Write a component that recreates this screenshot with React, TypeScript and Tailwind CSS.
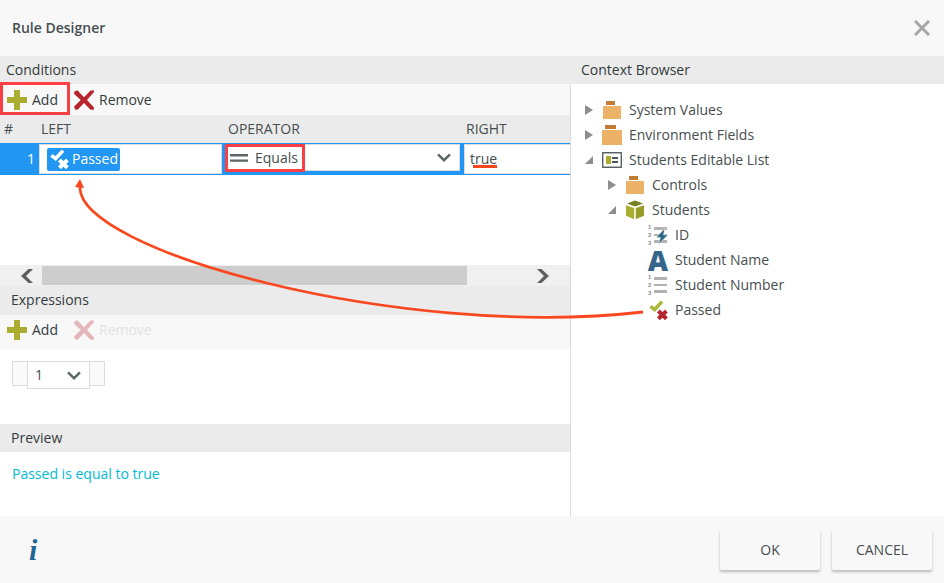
import { useState, type ReactNode } from "react";

const INK = "#464f50";

function PlusIcon() {
  return (
    <svg width="20" height="20" viewBox="0 0 20 20" aria-hidden="true">
      <path d="M7 0h6v7h7v6h-7v7H7v-7H0V7h7z" fill="#abad31" />
    </svg>
  );
}

function CrossIcon() {
  return (
    <svg width="20" height="20" viewBox="0 0 20 20" aria-hidden="true">
      <path d="M3.4 0.2 10 7.2 16.6 0.4 20 0.4 20 2 13 10 20 17.4 19.8 19.8 16.6 19.8 10 13 3.6 19.8 1 19.6 0.1 16.4 6.8 10 0.1 4 0.4 1.4z" fill="#b6252d" />
    </svg>
  );
}

function Chevron() {
  return (
    <svg width="14" height="9" viewBox="0 0 14 9" aria-hidden="true">
      <path d="M1 1.3 7 7.2 13 1.3" fill="none" stroke="#5c6667" strokeWidth="2.4" />
    </svg>
  );
}

function ScrollArrow({ flip = false }: { flip?: boolean }) {
  return (
    <svg width="12" height="14" viewBox="0 0 12 14" className={flip ? "rotate-180" : ""} aria-hidden="true">
      <path d="M7.5 0H12L5 7l7 7H7.5L0 7z" fill="#606060" />
    </svg>
  );
}

function CheckCross({ check, cross }: { check: string; cross: string }) {
  return (
    <svg width="20" height="20" viewBox="0 0 20 20" aria-hidden="true">
      <path d="M2.4 6.4 6.6 9.6 14 1.6" fill="none" stroke={check} strokeWidth="3.6" />
      <path d="M10.4 11 18.4 18.8M18.4 11 10.4 18.8" fill="none" stroke={cross} strokeWidth="4" />
    </svg>
  );
}

function FolderIcon({ large = false }: { large?: boolean }) {
  return (
    <svg width="20" height="20" viewBox="0 0 20 20" aria-hidden="true">
      {large ? (
        <>
          <path d="M3 0h11v4H3z" fill="#c47b33" />
          <path d="M0 5h20v15H0z" fill="#ebb268" />
        </>
      ) : (
        <>
          <path d="M4 1h9v4H4z" fill="#c47b33" />
          <path d="M1 6h18v13H1z" fill="#ebb268" />
        </>
      )}
    </svg>
  );
}

function ListIcon() {
  return (
    <svg width="20" height="20" viewBox="0 0 20 20" aria-hidden="true">
      <path d="M.7 2.7h18.6v14.6H.7z" fill="#fff" stroke="#5c6667" strokeWidth="1.4" />
      <path d="M4 6h5v8H4z" fill="#abad31" />
      <path d="M10 7h6v2h-6zM10 11h6v2h-6z" fill="#4c5658" />
    </svg>
  );
}

function CubeIcon() {
  return (
    <svg width="20" height="20" viewBox="0 0 20 20" aria-hidden="true">
      <path d="M2 3.4 10 .6l8 2.8-8 3z" fill="#76801f" />
      <path d="M1 5.2 9.2 8v11.2L1 15.8z" fill="#abad31" />
      <path d="M19 5.2 10.8 8v11.2L19 15.8z" fill="#989d2a" />
    </svg>
  );
}

function NumberIcon({ bolt = false }: { bolt?: boolean }) {
  return (
    <svg width="20" height="20" viewBox="0 0 20 20" className="overflow-visible" aria-hidden="true">
      <g fill="#8c8c8c" fontFamily="Liberation Sans, sans-serif" fontSize="6" fontWeight="700">
        <text x="0" y="4">1</text>
        <text x="0" y="12">2</text>
        <text x="0" y="20">3</text>
      </g>
      <path d="M6 2h13v3H6zM6 9h13v2H6zM6 15h13v3H6z" fill="#b2b2b2" />
      {bolt && (
        <path d="M16.8 3.2 8.2 12.6h4.2L10.4 19.2 20 10h-4.5z" fill="#2f6587" stroke="#fff" strokeWidth=".5" />
      )}
    </svg>
  );
}

function TextIcon() {
  return (
    <span
      className="flex h-5 w-5 items-center justify-center font-['Open_Sans',sans-serif] text-[28px] leading-5 font-extrabold text-[#34668a]"
      aria-hidden="true"
    >
      A
    </span>
  );
}

type Node = { label: string; icon: ReactNode; open?: boolean; branch?: boolean; children?: Node[] };

const TREE: Node[] = [
  { label: "System Values", icon: <FolderIcon />, branch: true },
  { label: "Environment Fields", icon: <FolderIcon large />, branch: true },
  {
    label: "Students Editable List",
    icon: <ListIcon />,
    branch: true,
    open: true,
    children: [
      { label: "Controls", icon: <FolderIcon />, branch: true },
      {
        label: "Students",
        icon: <CubeIcon />,
        branch: true,
        open: true,
        children: [
          { label: "ID", icon: <NumberIcon bolt /> },
          { label: "Student Name", icon: <TextIcon /> },
          { label: "Student Number", icon: <NumberIcon /> },
          { label: "Passed", icon: <CheckCross check="#abb83a" cross="#b6252d" /> },
        ],
      },
    ],
  },
];

function TreeList({ nodes, nested = false }: { nodes: Node[]; nested?: boolean }) {
  return (
    <ul className={nested ? "pl-[23px]" : ""}>
      {nodes.map((n) => (
        <li key={n.label}>
          <div className="flex h-[25px] items-center">
            <span className="flex w-[17px] shrink-0 items-center">
              {n.branch && (
                <svg width="8" height="10" viewBox="0 0 8 10" aria-hidden="true">
                  <path d={n.open ? "M8 1v8H0z" : "M0 0 8 5 0 10z"} fill="#8b8f8f" />
                </svg>
              )}
            </span>
            {n.icon}
            <span className="pl-[7px] whitespace-nowrap">{n.label}</span>
          </div>
          {n.children && <TreeList nodes={n.children} nested />}
        </li>
      ))}
    </ul>
  );
}

function ToolButton({ icon, label, disabled = false }: { icon: ReactNode; label: string; disabled?: boolean }) {
  return (
    <button type="button" disabled={disabled} className="flex items-center gap-[5px] text-[#333b3c] disabled:opacity-30">
      {icon}
      <span className={disabled ? "opacity-40" : ""}>{label}</span>
    </button>
  );
}

export default function App() {
  const [operator, setOperator] = useState("Equals");
  const [right, setRight] = useState("true");
  const [expression, setExpression] = useState("1");

  return (
    <div
      className="relative flex min-h-screen flex-col bg-[#f8f8f8] font-['Open_Sans','Noto_Sans',sans-serif] text-sm leading-5"
      style={{ color: INK }}
    >
      <header className="flex h-14 items-center justify-between pr-[14px] pl-3">
        <h1 className="font-semibold">Rule Designer</h1>
        <button type="button" aria-label="Close">
          <svg width="16" height="16" viewBox="0 0 16 16" aria-hidden="true">
            <path d="M1 1 15 15M15 1 1 15" stroke="#a6a6a6" strokeWidth="3" />
          </svg>
        </button>
      </header>

      <main className="grid flex-1 grid-cols-[571fr_373fr] bg-white">
        <div className="flex min-w-0 flex-col">
          <h2 className="flex h-7 items-center bg-[#ebebeb] pl-[6px] text-[#333b3c]">Conditions</h2>
          <div className="flex min-w-0 flex-1 flex-col border-r border-[#dcdcdc]">
            <div className="flex h-[31px] items-center gap-4 bg-[#f8f8f8] pl-[7px]">
              <div className="relative">
                <ToolButton icon={<PlusIcon />} label="Add" />
                <span className="pointer-events-none absolute -top-2 -right-3 -bottom-[5px] -left-[7px] border-3 border-[#fb4045]" />
              </div>
              <ToolButton icon={<CrossIcon />} label="Remove" />
            </div>

            <table className="w-full table-fixed border-collapse text-left">
              <colgroup>
                <col className="w-[39px]" />
                <col className="w-[183px]" />
                <col className="w-[241px]" />
                <col />
              </colgroup>
              <thead>
                <tr className="h-7 bg-[#ebebeb]">
                  <th className="p-0 pl-1 font-normal">#</th>
                  <th className="p-0 pl-[2px] font-normal">LEFT</th>
                  <th className="p-0 pl-[6px] font-normal">OPERATOR</th>
                  <th className="p-0 pl-[3px] font-normal">RIGHT</th>
                </tr>
              </thead>
              <tbody>
                <tr className="h-8 bg-[#2196f3]">
                  <td className="p-0 pr-1 text-right text-white">1</td>
                  <td className="p-0">
                    <div className="flex h-[30px] items-center border border-[#dcdcdc] bg-white pl-[7px]">
                      <span className="flex h-[23px] items-center gap-[3px] rounded-xs bg-[#2196f3] px-[2px] text-white">
                        <CheckCross check="#fff" cross="#fff" />
                        Passed
                      </span>
                    </div>
                  </td>
                  <td className="p-0 align-top">
                    <div className="relative mt-px mr-[3px] ml-[3px] h-[27px] border border-[#dcdcdc] bg-white">
                      <select
                        aria-label="Operator"
                        value={operator}
                        onChange={(e) => setOperator(e.target.value)}
                        className="h-full w-full appearance-none pl-[29px] outline-none"
                      >
                        <option>Equals</option>
                        <option>Not equals</option>
                      </select>
                      <span className="pointer-events-none absolute inset-y-0 left-1 flex items-center">
                        <svg width="18" height="8" viewBox="0 0 18 8" aria-hidden="true">
                          <path d="M0 0h18v2.4H0zM0 5.4h18v2.4H0z" fill="#5c6667" />
                        </svg>
                      </span>
                      <span className="pointer-events-none absolute inset-y-0 right-2 flex items-center">
                        <Chevron />
                      </span>
                      <span className="pointer-events-none absolute -top-px -left-px h-7 w-20 border-3 border-[#fb4045]" />
                    </div>
                  </td>
                  <td className="p-0">
                    <div className="relative ml-px h-[30px] border border-r-0 border-[#dcdcdc] bg-white">
                      <input
                        aria-label="Right value"
                        value={right}
                        onChange={(e) => setRight(e.target.value)}
                        className="h-full w-full pb-[2px] pl-[5px] outline-none"
                      />
                      <span className="pointer-events-none absolute top-5 left-2 h-[3px] w-6 bg-[#f4461f]" />
                    </div>
                  </td>
                </tr>
              </tbody>
            </table>

            <div className="h-[90px] bg-white" />

            <div className="flex h-[21px] items-center bg-[#f0f0f0]">
              <button type="button" aria-label="Scroll left" className="flex w-[42px] justify-end pr-[9px]">
                <ScrollArrow />
              </button>
              <div className="flex-1">
                <div className="h-[19px] w-[87.5%] bg-[#cdcdcd]" />
              </div>
              <button type="button" aria-label="Scroll right" className="flex w-[42px] pl-[9px]">
                <ScrollArrow flip />
              </button>
            </div>

            <h2 className="flex h-[29px] items-center bg-[#ebebeb] pb-[2px] pl-[11px] text-[#333b3c]">Expressions</h2>
            <div className="flex h-[34px] items-center gap-4 bg-[#f8f8f8] pb-1 pl-[7px]">
              <ToolButton icon={<PlusIcon />} label="Add" />
              <ToolButton icon={<CrossIcon />} label="Remove" disabled />
            </div>
            <div className="flex h-[75px] items-start bg-white pt-3 pl-3">
              <div className="h-[25px] w-[15px] border border-r-0 border-[#dcdcdc] bg-[#fafafa]" />
              <div className="relative h-7 w-[63px] border border-[#dcdcdc]">
                <select
                  aria-label="Expression"
                  value={expression}
                  onChange={(e) => setExpression(e.target.value)}
                  className="h-full w-full appearance-none pl-[7px] outline-none"
                >
                  <option>1</option>
                </select>
                <span className="pointer-events-none absolute inset-y-0 right-2 flex items-center">
                  <Chevron />
                </span>
              </div>
              <div className="h-[25px] w-[15px] border border-l-0 border-[#dcdcdc] bg-[#fafafa]" />
            </div>

            <h2 className="flex h-7 items-center bg-[#ebebeb] pl-[11px] text-[#333b3c]">Preview</h2>
            <p className="h-16 pt-3 pl-3 text-[#00bcd4]">Passed is equal to true</p>
          </div>
        </div>

        <div className="flex min-w-0 flex-col">
          <h2 className="flex h-7 items-center bg-[#ebebeb] pl-[10px] text-[#333b3c]">Context Browser</h2>
          <nav aria-label="Context Browser" className="pt-[13px] pl-[14px]">
            <TreeList nodes={TREE} />
          </nav>
        </div>
      </main>

      <footer className="flex h-[67px] items-center justify-between pr-3 pl-[29px]">
        <button
          type="button"
          aria-label="Information"
          className="font-['Liberation_Serif',serif] text-[30px] leading-8 font-bold text-[#1d6797] italic"
        >
          i
        </button>
        <div className="flex gap-3">
          <button type="button" className="h-10 w-25 rounded-xs bg-[#f8f8f8] shadow-[0_2px_3px_rgba(0,0,0,0.25)]">
            OK
          </button>
          <button type="button" className="h-10 w-25 rounded-xs bg-[#f8f8f8] shadow-[0_2px_3px_rgba(0,0,0,0.25)]">
            CANCEL
          </button>
        </div>
      </footer>

      <svg className="pointer-events-none absolute top-0 left-0" width="660" height="340" viewBox="0 0 660 340" aria-hidden="true">
        <path d="M643 312C400 340 75 250 80 186" fill="none" stroke="#f9481f" strokeWidth="2.8" />
        <path d="M80 179 84 188 75 187z" fill="#f9481f" />
      </svg>
    </div>
  );
}
